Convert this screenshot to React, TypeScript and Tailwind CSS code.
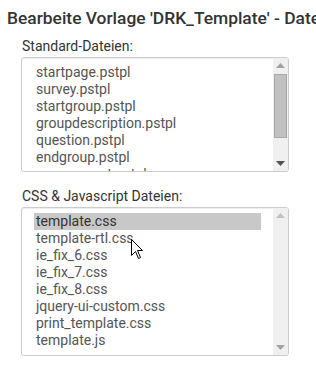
import React from "react";

const standardFiles = [
  "startpage.pstpl",
  "survey.pstpl",
  "startgroup.pstpl",
  "groupdescription.pstpl",
  "question.pstpl",
  "endgroup.pstpl",
  "assessment.pstpl",
];

const cssFiles = [
  "template.css",
  "template-rtl.css",
  "ie_fix_6.css",
  "ie_fix_7.css",
  "ie_fix_8.css",
  "jquery-ui-custom.css",
  "print_template.css",
  "template.js",
];

const Scrollbar: React.FC<{ thumb?: boolean }> = ({ thumb }) => (
  <div className="w-[15px] shrink-0 bg-[#f0f0f0] flex flex-col items-center">
    <div className="h-[15px] flex items-center justify-center">
      <svg width="9" height="5" viewBox="0 0 9 5">
        <path d="M4.5 0L9 5H0z" fill={thumb ? "#a3a3a3" : "#c2c2c2"} />
      </svg>
    </div>
    <div className="flex-1 w-full px-[1px]">
      {thumb && (
        <div className="mt-[1px] h-[64px] bg-[#c1c1c1] border border-[#a8a8a8]" />
      )}
    </div>
    <div className="h-[15px] flex items-center justify-center">
      <svg width="9" height="5" viewBox="0 0 9 5">
        <path d="M0 0H9L4.5 5z" fill={thumb ? "#505050" : "#a3a3a3"} />
      </svg>
    </div>
  </div>
);

const App: React.FC = () => {
  return (
    <div className="w-[316px] h-[373px] bg-white overflow-hidden font-['Roboto',sans-serif] relative">
      <h3 className="pl-[7px] pt-[8px] text-[17.4px] leading-[20px] font-medium text-[#333] whitespace-nowrap">
        Bearbeite Vorlage 'DRK_Template' - Dateien
      </h3>

      <div className="pl-[21px] w-[289px]">
        <div className="mt-[10px] pl-[1px] text-[14px] leading-[16px] text-[#333]">
          Standard-Dateien:
        </div>
        <div className="mt-[3px] h-[115px] flex border border-[#cccccc] rounded-[3px] shadow-[inset_0_1px_1px_rgba(0,0,0,0.075)] overflow-hidden">
          <div className="flex-1 pl-[12px] pr-[12px] pt-[6px] overflow-hidden">
            {standardFiles.map((f) => (
              <div
                key={f}
                className="px-[2px] text-[14px] leading-[17px] text-[#555] whitespace-nowrap"
              >
                {f}
              </div>
            ))}
          </div>
          <Scrollbar thumb />
        </div>

        <div className="mt-[16px] pl-[1px] text-[14px] leading-[16px] text-[#333]">
          CSS &amp; Javascript Dateien:
        </div>
        <div className="mt-[3px] h-[149px] flex border border-[#cccccc] rounded-[3px] shadow-[inset_0_1px_1px_rgba(0,0,0,0.075)] overflow-hidden">
          <div className="flex-1 pl-[12px] pr-[12px] pt-[5px] overflow-hidden">
            {cssFiles.map((f, i) => (
              <div
                key={f}
                className={`px-[2px] text-[14px] leading-[17px] whitespace-nowrap ${
                  i === 0 ? "bg-[#c8c8c8] text-[#333]" : "text-[#555]"
                }`}
              >
                {f}
              </div>
            ))}
          </div>
          <Scrollbar />
        </div>
      </div>

      {/* mouse cursor */}
      <svg
        className="absolute left-[131px] top-[239px]"
        width="13"
        height="21"
        viewBox="0 0 13 21"
      >
        <path
          d="M0.5 0.5V16.5L4.5 12.5L7.5 19.5L9.5 18.5L6.5 11.5H11.5Z"
          fill="#fff"
          stroke="#000"
          strokeWidth="1"
        />
      </svg>
    </div>
  );
};

export default App;
